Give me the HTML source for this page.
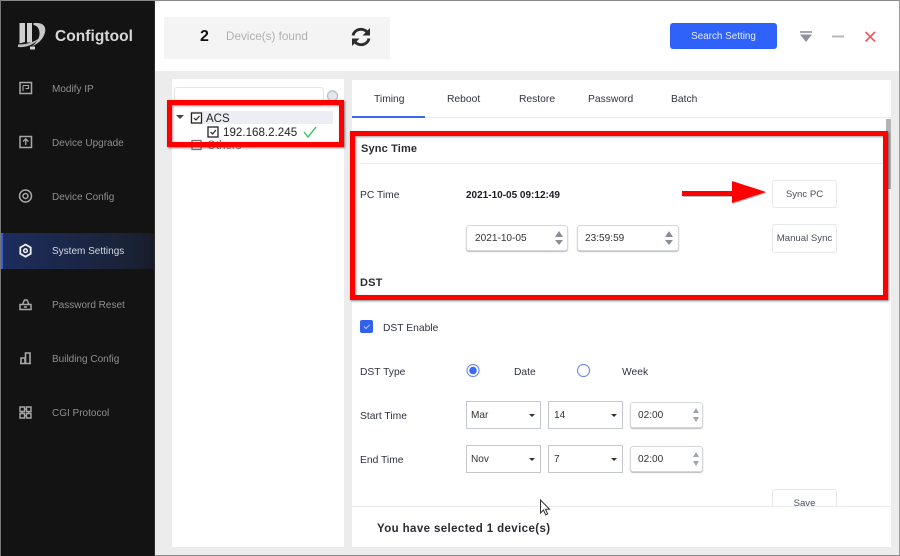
<!DOCTYPE html>
<html><head><meta charset="utf-8">
<style>
html,body{margin:0;padding:0}
body{width:900px;height:556px;overflow:hidden;position:relative;background:#ececec;font-family:"Liberation Sans",sans-serif}
div,span{position:absolute;box-sizing:border-box;white-space:nowrap}
svg{position:absolute;overflow:visible}
.n{left:52px;font-size:10px;color:#8f8f8f;line-height:14px}
.t{font-size:10.3px;color:#2f3340;line-height:14px}
.inp{background:#fff;border:1px solid #d5d7dc;border-radius:3px;box-shadow:0 1px 1px #bbb;font-size:10.1px;color:#333;line-height:26px}
.sel{background:#fff;border:1px solid #c4c7cc;font-size:10.1px;color:#333;line-height:28px;height:28px}
.btn{background:#fff;border:1px solid #e6e8ec;border-radius:3px;font-size:9.6px;color:#4a4e5a;text-align:center}
</style></head><body>
<!-- window edges -->
<div style="left:0;top:0;width:900px;height:1px;background:#8a8a8a"></div>
<div style="left:1px;top:1px;width:154px;height:555px;background:#131313"></div>
<div style="left:0;top:0;width:1px;height:556px;background:#777"></div>
<div style="left:155px;top:1px;width:745px;height:70px;background:#fff;border-top-left-radius:7px"></div>
<div style="left:154px;top:1px;width:1px;height:555px;background:#2a2a2a"></div>
<div style="left:899px;top:0;width:1px;height:556px;background:#999"></div>
<div style="left:155px;top:555px;width:745px;height:1px;background:#8a8a8a"></div>

<!-- logo -->
<svg style="left:0;top:0" width="60" height="60">
<path d="M19.500 23h5.500v19l-5.500 1.500zM27 23h5v19.500h-5z" fill="#d0d0d0"/>
<path d="M33.500 23h3.500c8 0 9.500 6 7.500 11-2 6-7 10-13 12.500 4-3 7.500-7 8-12 .4-5-2-9-6-9.500z" fill="#c8c8c8"/>
<path d="M18 44.500c8 0 16-2 22-7-5 7-14 10.500-22 9.500z" fill="#bdbdbd"/>
<path d="M30 46.500h5v3h-5z" fill="#d4d4d4"/>
</svg>
<div style="left:55px;top:28px;font-size:15.5px;font-weight:bold;color:#d8d8d8;line-height:18px;letter-spacing:.05px">Configtool</div>

<!-- sidebar -->
<div style="left:1px;top:233px;width:153px;height:36px;background:linear-gradient(90deg,#1c2d5e,#1a2236 85%,#181c28)"></div>
<div style="left:1px;top:233px;width:2px;height:36px;background:#3560d8"></div>
<div class="n" style="top:83px">Modify IP</div>
<div class="n" style="top:137px">Device Upgrade</div>
<div class="n" style="top:191px">Device Config</div>
<div class="n" style="top:245px;color:#d4d8e2">System Settings</div>
<div class="n" style="top:299px">Password Reset</div>
<div class="n" style="top:353px">Building Config</div>
<div class="n" style="top:407px">CGI Protocol</div>
<svg style="left:0;top:0" width="40" height="430" fill="none" stroke="#a8a8a8" stroke-width="1.500">
<rect x="20" y="82.500" width="11.500" height="11"/><path d="M23 85.500h5.500v3h-3M23 85.500v5.500" stroke-width="1.100"/>
<rect x="20" y="136.500" width="11.500" height="11"/><path d="M25.700 145v-6M23 141.500l2.700-2.700 2.700 2.700" stroke-width="1.300"/>
<circle cx="25.500" cy="196" r="6"/><circle cx="25.500" cy="196" r="2.500"/>
<path d="M25.500 244.500l5.200 3v6.200l-5.200 3-5.200-3v-6.200z" stroke="#f0f0f0" stroke-width="1.800"/><circle cx="25.500" cy="250.700" r="1.800" stroke="#f0f0f0"/>
<path d="M20 304.500h11v5H20zM22.500 304.500l2-4.500h2.500l2 4.500M24 307h3" stroke-width="1.500"/>
<path d="M20 363.500h11M21 363v-5h4v5M25.500 363v-10h4.500v10" stroke-width="1.600"/>
<path d="M20 407h4.500v4.500H20zM26.500 407H31v4.500h-4.500zM20 413.500h4.500V418H20zM26.500 413.500H31V418h-4.500zM24.500 409.200h2M24.500 415.700h2M22.200 411.500v2M28.700 411.500v2" stroke-width="1.400"/>
</svg>

<!-- top bar -->
<div style="left:164px;top:17px;width:226px;height:42px;background:#f4f4f4"></div>
<div style="left:200px;top:27px;font-size:16px;font-weight:bold;color:#111;line-height:20px">2</div>
<div style="left:226px;top:30px;font-size:11.700px;color:#b0b0b0;line-height:14px">Device(s) found</div>
<svg style="left:351px;top:27px" width="20" height="20" fill="none" stroke="#2d2d2d" stroke-width="2.900">
<path d="M2 8.500a8 7.500 0 0 1 14-3.500M18 11.500a8 7.500 0 0 1-14 3.500"/>
<path d="M19 1v7.500h-7.500zM1 19v-7.500h7.500z" fill="#2d2d2d" stroke="none"/>
</svg>
<div style="left:670px;top:23px;width:107px;height:26px;background:#2f62fb;border-radius:3px;color:#e4eaff;font-size:9.900px;line-height:27px;text-align:center">Search Setting</div>
<svg style="left:799px;top:30px" width="80" height="14">
<path d="M1 1h12v2H1z" fill="#a4a8b0"/><path d="M1 4.500h12l-6 7.500z" fill="#8e929a"/>
<path d="M33 5.500h12v2H33z" fill="#b5b8be"/>
<path d="M66.500 2l9.500 9.500M76 2l-9.500 9.500" stroke="#ee5a5f" stroke-width="1.700" fill="none"/>
</svg>

<!-- left panel -->
<div style="left:172px;top:79px;width:172px;height:468px;background:#fff"></div>
<div style="left:174px;top:87px;width:150px;height:19px;background:#fff;border:1px solid #e4e4e4;border-radius:3px"></div>
<svg style="left:326px;top:89px" width="14" height="16"><circle cx="6.500" cy="7" r="5" fill="#e4e8ee" stroke="#b8c2ce" stroke-width="1.400"/></svg>
<div style="left:190px;top:111px;width:143px;height:13px;background:#eceef3"></div>
<svg style="left:175px;top:112px" width="40" height="40" fill="none" stroke="#222" stroke-width="1.300">
<path d="M1 3h8l-4 4z" fill="#444" stroke="none"/>
<rect x="16.500" y="1" width="10" height="10" fill="#fff"/><path d="M19 6l2 2 3.500-4" stroke-width="1.200"/>
<rect x="33" y="15" width="10" height="10" fill="#fff"/><path d="M35.500 20l2 2 3.500-4" stroke-width="1.200"/>
<rect x="17" y="28.500" width="9" height="9" fill="#fff" stroke="#777"/>
<path d="M2 30l3 3-3 3z" fill="#aaa" stroke="none"/>
</svg>
<div style="left:206px;top:112px;font-size:11.500px;color:#222;line-height:14px">ACS</div>
<div style="left:223px;top:126px;font-size:11.600px;color:#222;line-height:14px">192.168.2.245</div>
<svg style="left:302px;top:125px" width="16" height="14"><path d="M2 7l4 5 8-10" fill="none" stroke="#37c25a" stroke-width="1.400"/></svg>
<div style="left:207px;top:139px;font-size:11.500px;color:#777;line-height:14px">Others</div>

<!-- right panel -->
<div style="left:352px;top:80px;width:539px;height:467px;background:#fff"></div>
<div style="left:352px;top:117px;width:539px;height:1px;background:#e6eaf2"></div>
<div style="left:352px;top:116px;width:73px;height:2px;background:#3d66ee"></div>
<div class="t" style="left:374px;top:93px">Timing</div>
<div class="t" style="left:447px;top:93px">Reboot</div>
<div class="t" style="left:519px;top:93px">Restore</div>
<div class="t" style="left:588px;top:93px">Password</div>
<div class="t" style="left:671px;top:93px">Batch</div>

<div style="left:886px;top:119px;width:5px;height:70px;background:#b4b4b4"></div>

<div style="left:361px;top:142px;font-size:11px;font-weight:bold;color:#2b2b33;line-height:14px;letter-spacing:.15px">Sync Time</div>
<div style="left:360px;top:163px;width:525px;height:1px;background:#e6eaf2"></div>
<div class="t" style="left:360px;top:189px">PC Time</div>
<div style="left:466px;top:189px;font-size:10px;font-weight:bold;color:#1c1c22;line-height:14px">2021-10-05 09:12:49</div>
<div class="btn" style="left:772px;top:180px;width:65px;height:28px;line-height:27px">Sync PC</div>
<div class="btn" style="left:772px;top:224px;width:65px;height:29px;line-height:27px">Manual Sync</div>
<div class="inp" style="left:466px;top:225px;width:102px;height:26px;padding-left:8px">2021-10-05</div>
<div class="inp" style="left:577px;top:225px;width:102px;height:26px;padding-left:7px">23:59:59</div>
<svg style="left:555px;top:230px" width="130" height="16" fill="#8a8e96">
<path d="M0 7l4-6 4 6zM0 10h8l-4 5zM110 7l4-6 4 6zM110 10h8l-4 5z"/>
</svg>
<div style="left:360px;top:276px;font-size:11px;font-weight:bold;color:#2b2b33;line-height:14px;letter-spacing:.2px">DST</div>

<div style="left:360px;top:320px;width:13px;height:13px;background:#3260f0;border-radius:2px"></div>
<svg style="left:360px;top:320px" width="13" height="13"><path d="M4 6.500l2 2 3.500-3.500" fill="none" stroke="#b9c9ff" stroke-width="1"/></svg>
<div class="t" style="left:383px;top:322px">DST Enable</div>

<div class="t" style="left:360px;top:366px">DST Type</div>
<svg style="left:465px;top:363px" width="130" height="15" fill="none">
<circle cx="8" cy="7.500" r="6" stroke="#6f8ff2" stroke-width="1.200"/><circle cx="8" cy="7.500" r="3.800" fill="#3d6af0"/>
<circle cx="118.500" cy="7.500" r="6" stroke="#6f8ff2" stroke-width="1.200"/>
</svg>
<div class="t" style="left:514px;top:366px">Date</div>
<div class="t" style="left:622px;top:366px">Week</div>

<div class="t" style="left:360px;top:410px">Start Time</div>
<div class="sel" style="left:466px;top:401px;width:75px;padding-left:4px">Mar</div>
<div class="sel" style="left:548px;top:401px;width:75px;padding-left:5px">14</div>
<div class="inp" style="left:630px;top:402px;width:73px;height:26px;padding-left:7px">02:00</div>
<div class="t" style="left:360px;top:454px">End Time</div>
<div class="sel" style="left:466px;top:445px;width:75px;padding-left:4px">Nov</div>
<div class="sel" style="left:548px;top:445px;width:75px;padding-left:5px">7</div>
<div class="inp" style="left:630px;top:446px;width:73px;height:26px;padding-left:7px">02:00</div>
<svg style="left:0;top:0" width="720" height="480">
<g fill="#333"><path d="M529 414h6l-3 3zM611 414h6l-3 3zM529 458h6l-3 3zM611 458h6l-3 3z"/></g>
<g fill="#a0a4ab"><path d="M696 408l3 5h-6zM693 417h6l-3 5zM696 452l3 5h-6zM693 461h6l-3 5z"/></g>
</svg>

<div class="btn" style="left:772px;top:489px;width:65px;height:28px;line-height:28px">Save</div>
<div style="left:352px;top:506px;width:539px;height:41px;background:#fff;border-top:1px solid #e8ebf2"></div>
<div style="left:377px;top:522px;font-size:11.500px;font-weight:bold;color:#2b2b33;line-height:14px;letter-spacing:.39px">You have selected 1 device(s)</div>
<svg style="left:539px;top:499px" width="14" height="18"><path d="M1.500 1v13l3-3 2.200 5 2-1-2.200-4.800h4z" fill="#fff" stroke="#333" stroke-width="1"/></svg>

<!-- red annotations -->
<div style="left:167px;top:100px;width:177px;height:47px;border:5px solid #f00;box-shadow:1px 1px 2px rgba(0,0,0,.5),inset 1px 1px 2px rgba(0,0,0,.4)"></div>
<div style="left:350px;top:131px;width:538px;height:169px;border:5px solid #f00;box-shadow:1px 1px 2px rgba(0,0,0,.5),inset 1px 1px 2px rgba(0,0,0,.4)"></div>
<svg style="left:680px;top:178px" width="90" height="30">
<path d="M2 13h50V3l34 11L52 25V18H2z" fill="#777" opacity=".5" transform="translate(1 1)"/>
<path d="M2 13h50V3l34 11L52 25V18H2z" fill="#f00"/>
</svg>
</body></html>
